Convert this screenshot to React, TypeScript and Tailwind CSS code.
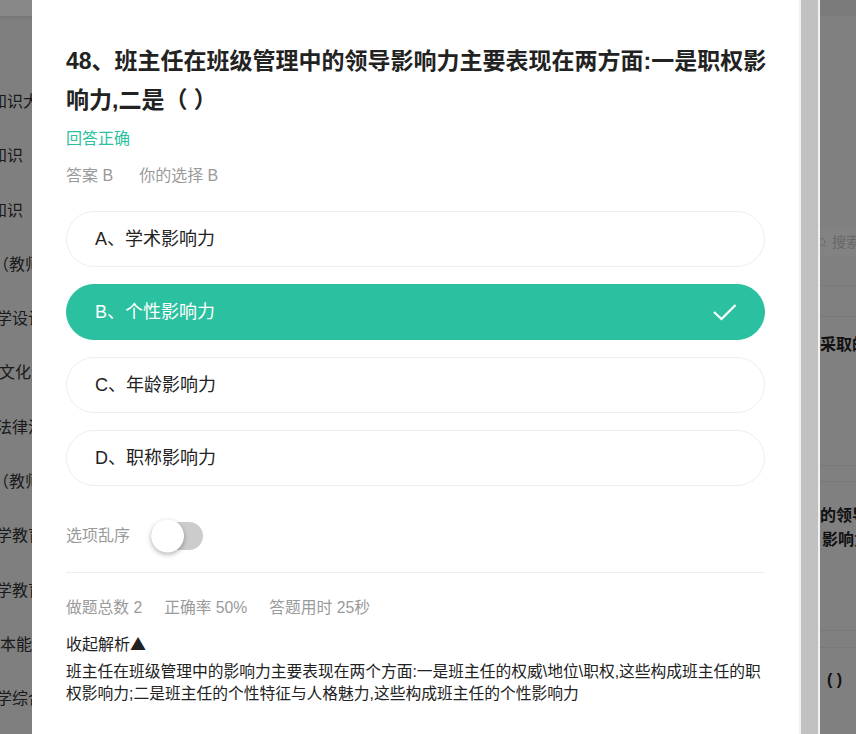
import { Search } from "lucide-react";

const options = [
  { key: "A", text: "学术影响力", picked: false },
  { key: "B", text: "个性影响力", picked: true },
  { key: "C", text: "年龄影响力", picked: false },
  { key: "D", text: "职称影响力", picked: false },
];

// sidebar of the page behind the dialog, only its right edge shows
const sideItems = [
  { text: "知识大纲", cls: "-ml-[9px]" },
  { text: "知识", cls: "-ml-[9px]" },
  { text: "知识", cls: "-ml-[9px]" },
  { text: "（教师资格）", cls: "-ml-[7px]" },
  { text: "学设计", cls: "-ml-[4px]" },
  { text: "文化素养", cls: "-ml-[1px]" },
  { text: "法律法规", cls: "-ml-[4px]" },
  { text: "（教师资格）", cls: "-ml-[7px]" },
  { text: "学教育", cls: "-ml-[4px]" },
  { text: "学教育", cls: "-ml-[4px]" },
  { text: "本能力", cls: "ml-0" },
  { text: "学综合", cls: "-ml-[4px]" },
];

function Option({ k, text, picked }: { k: string; text: string; picked: boolean }) {
  return (
    <div
      className={
        picked
          ? "flex h-[56px] items-center justify-between rounded-full border border-[#2bc0a0] bg-[#2bc0a0] pl-[28px] pr-[27px] text-white"
          : "flex h-[56px] items-center justify-between rounded-full border border-[#eeeeee] bg-white pl-[28px] pr-[27px] text-[#222]"
      }
    >
      <span className="text-[18px] leading-[24px]">
        {k}、{text}
      </span>
      {picked && (
        <svg width="24" height="18" viewBox="0 0 24 18" fill="none">
          <polyline points="1,9 8.5,16 22.5,2" stroke="white" strokeWidth="2.2" />
        </svg>
      )}
    </div>
  );
}

export default function App() {
  return (
    <div className="relative h-[734px] w-[856px] overflow-hidden bg-[#f0f0f0] font-['Liberation_Sans','Noto_Sans_CJK_SC',sans-serif]">
      {/* page behind */}
      <div className="flex h-full">
        <div className="w-[32px] shrink-0 overflow-hidden">
          <div className="h-[16px] bg-white shadow-[0_2px_4px_rgba(0,0,0,0.08)]" />
          <div className="mt-[59px] flex flex-col">
            {sideItems.map((it, i) => (
              <div key={i} className={`h-[54.3px] whitespace-nowrap text-[16px] leading-[54px] text-[#333] ${it.cls}`}>
                {it.text}
              </div>
            ))}
          </div>
        </div>
        <div className="w-[788px] shrink-0" />
        <div className="flex-1 overflow-hidden bg-[#f2f2f2]">
          <div className="h-[16px] bg-[#e9e9e9]" />
          <div className="mt-[212px] flex h-[28px] items-center gap-[5px] bg-[#f6f6f6] -ml-[4px] whitespace-nowrap text-[14px] text-[#c4c4c4]">
            <Search size={11} strokeWidth={1.6} className="shrink-0" />
            搜索题目
          </div>
          <div className="mt-[29px] h-[32px] border-y border-[#e4e4e4]" />
          <div className="h-[148px] pt-[16px]">
            <p className="whitespace-nowrap text-[16px] font-bold leading-[24px] text-[#222]">采取的措施</p>
          </div>
          <div className="h-[17px] border-y border-[#e4e4e4]" />
          <div className="h-[148px] pt-[22px]">
            <p className="whitespace-nowrap text-[16px] font-bold leading-[24px] text-[#222]">的领导</p>
            <p className="whitespace-nowrap pl-[2px] text-[16px] font-bold leading-[24px] text-[#222]">影响力</p>
          </div>
          <div className="h-[18px] border-y border-[#e4e4e4]" />
          <div className="h-[100px] pl-[7px] pt-[20px]">
            <p className="whitespace-nowrap text-[16px] font-bold leading-[24px] text-[#222]">( )</p>
          </div>
        </div>
      </div>

      {/* mask */}
      <div className="absolute inset-0 bg-black/[0.47]" />

      {/* dialog with its scroll bar */}
      <div className="absolute left-[32px] top-0 bottom-0 flex w-[788px]">
        <div className="w-[767px] shrink-0 bg-white px-[34px] pt-[42px]">
          <h2 className="-mr-[8px] text-[23px] font-bold leading-[39px] text-[#222]">
            48、班主任在班级管理中的领导影响力主要表现在两方面:一是职权影响力,二是（ ）
          </h2>
          <p className="mt-[7px] text-[16px] leading-[24px] text-[#2bc0a0]">回答正确</p>
          <div className="mt-[13px] flex gap-[26px] text-[16px] leading-[24px] text-[#9a9a9a]">
            <span>答案 B</span>
            <span>你的选择 B</span>
          </div>

          <div className="mt-[23px] flex flex-col gap-[17px]">
            {options.map((o) => (
              <Option key={o.key} k={o.key} text={o.text} picked={o.picked} />
            ))}
          </div>

          <div className="mt-[33px] flex h-[34px] items-center gap-[21px]">
            <span className="text-[16px] text-[#9a9a9a]">选项乱序</span>
            <div className="relative h-[28px] w-[52px] rounded-full bg-[#cccccc]">
              <div className="absolute left-0 top-1/2 size-[33px] -translate-y-1/2 rounded-full bg-white shadow-[0_2px_5px_rgba(0,0,0,0.3)]" />
            </div>
          </div>

          <div className="mt-[19px] border-t border-[#eeeeee]" />

          <div className="mt-[23px] flex gap-[22px] text-[15.75px] leading-[24px] text-[#9a9a9a]">
            <span>做题总数 2</span>
            <span>正确率 50%</span>
            <span>答题用时 25秒</span>
          </div>

          <p className="mt-[12px] text-[16px] leading-[22px] text-[#222]">
            收起解析<span className="font-['Noto_Sans_CJK_SC',sans-serif]">▲</span>
          </p>
          <p className="mt-[5px] text-[15.75px] leading-[22px] text-[#222]">
            班主任在班级管理中的影响力主要表现在两个方面:一是班主任的权威\地位\职权,这些构成班主任的职权影响力;二是班主任的个性特征与人格魅力,这些构成班主任的个性影响力
          </p>
        </div>
        <div className="w-[21px] shrink-0 bg-[#f1f1f1] px-[2px]">
          <div className="h-full bg-[#c1c1c1]" />
        </div>
      </div>
    </div>
  );
}
